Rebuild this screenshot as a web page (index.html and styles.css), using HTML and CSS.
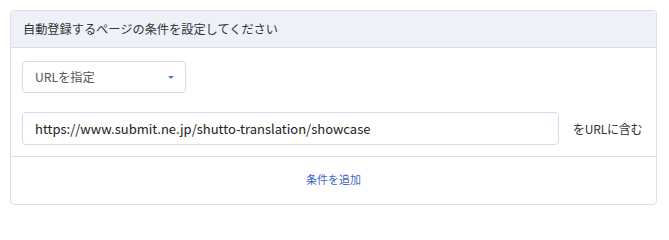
FILE: index.html
```html
<!DOCTYPE html>
<html lang="ja">
<head>
<meta charset="utf-8">
<link rel="stylesheet" href="styles.css">
</head>
<body>
<div class="card">
  <div class="card-header">自動登録するページの条件を設定してください</div>
  <div class="card-body">
    <div class="select">
      <span class="select-text">URLを指定</span>
      <span class="caret"></span>
    </div>
    <div class="row">
      <div class="input">https://www.submit.ne.jp/shutto-translation/showcase</div>
      <span class="suffix">をURLに含む</span>
    </div>
  </div>
  <div class="card-footer">
    <a class="add-link">条件を追加</a>
  </div>
</div>
</body>
</html>
```
FILE: styles.css
```css
html, body {
  margin: 0;
  padding: 0;
  background: #ffffff;
}
body {
  padding: 10px 12px 0 10px;
  font-family: "Noto Sans CJK JP", "Noto Sans", sans-serif;
  font-size: 13px;
  color: #333333;
}
.card {
  width: 645px;
  border: 1px solid #dcdfe5;
  border-radius: 4px;
  overflow: hidden;
}
.card-header {
  height: 37px;
  box-sizing: border-box;
  padding: 0 12px 1px;
  display: flex;
  align-items: center;
  background: #eef2f8;
  border-bottom: 1px solid #dcdfe5;
  font-size: 12.2px;
  color: #333333;
}
.card-body {
  padding: 13px 12px 11px 11px;
  border-bottom: 1px solid #dcdfe5;
}
.select {
  width: 164px;
  height: 32px;
  box-sizing: border-box;
  border: 1px solid #cfdcf0;
  border-radius: 4px;
  display: flex;
  align-items: center;
  justify-content: space-between;
  padding: 0 11px 0 12px;
  color: #555555;
  font-size: 12.2px;
}
.caret {
  width: 0;
  height: 0;
  border-left: 3.5px solid transparent;
  border-right: 3.5px solid transparent;
  border-top: 3.5px solid #4a76d4;
  margin-top: 1px;
}
.row {
  display: flex;
  align-items: center;
  margin-top: 19px;
}
.input {
  flex: 1;
  height: 33px;
  box-sizing: border-box;
  border: 1px solid #cfdcf0;
  border-radius: 4px;
  display: flex;
  align-items: center;
  padding: 0 12px;
  color: #222222;
  font-size: 13px;
}
.suffix {
  flex: none;
  white-space: nowrap;
  margin-left: 14px;
  width: 71px;
  font-size: 12px;
  letter-spacing: -0.2px;
  color: #333333;
}
.card-footer {
  height: 47px;
  box-sizing: border-box;
  padding-bottom: 4px;
  display: flex;
  align-items: center;
  justify-content: center;
}
.add-link {
  color: #3b69c4;
  font-size: 11px;
  cursor: pointer;
}
```
